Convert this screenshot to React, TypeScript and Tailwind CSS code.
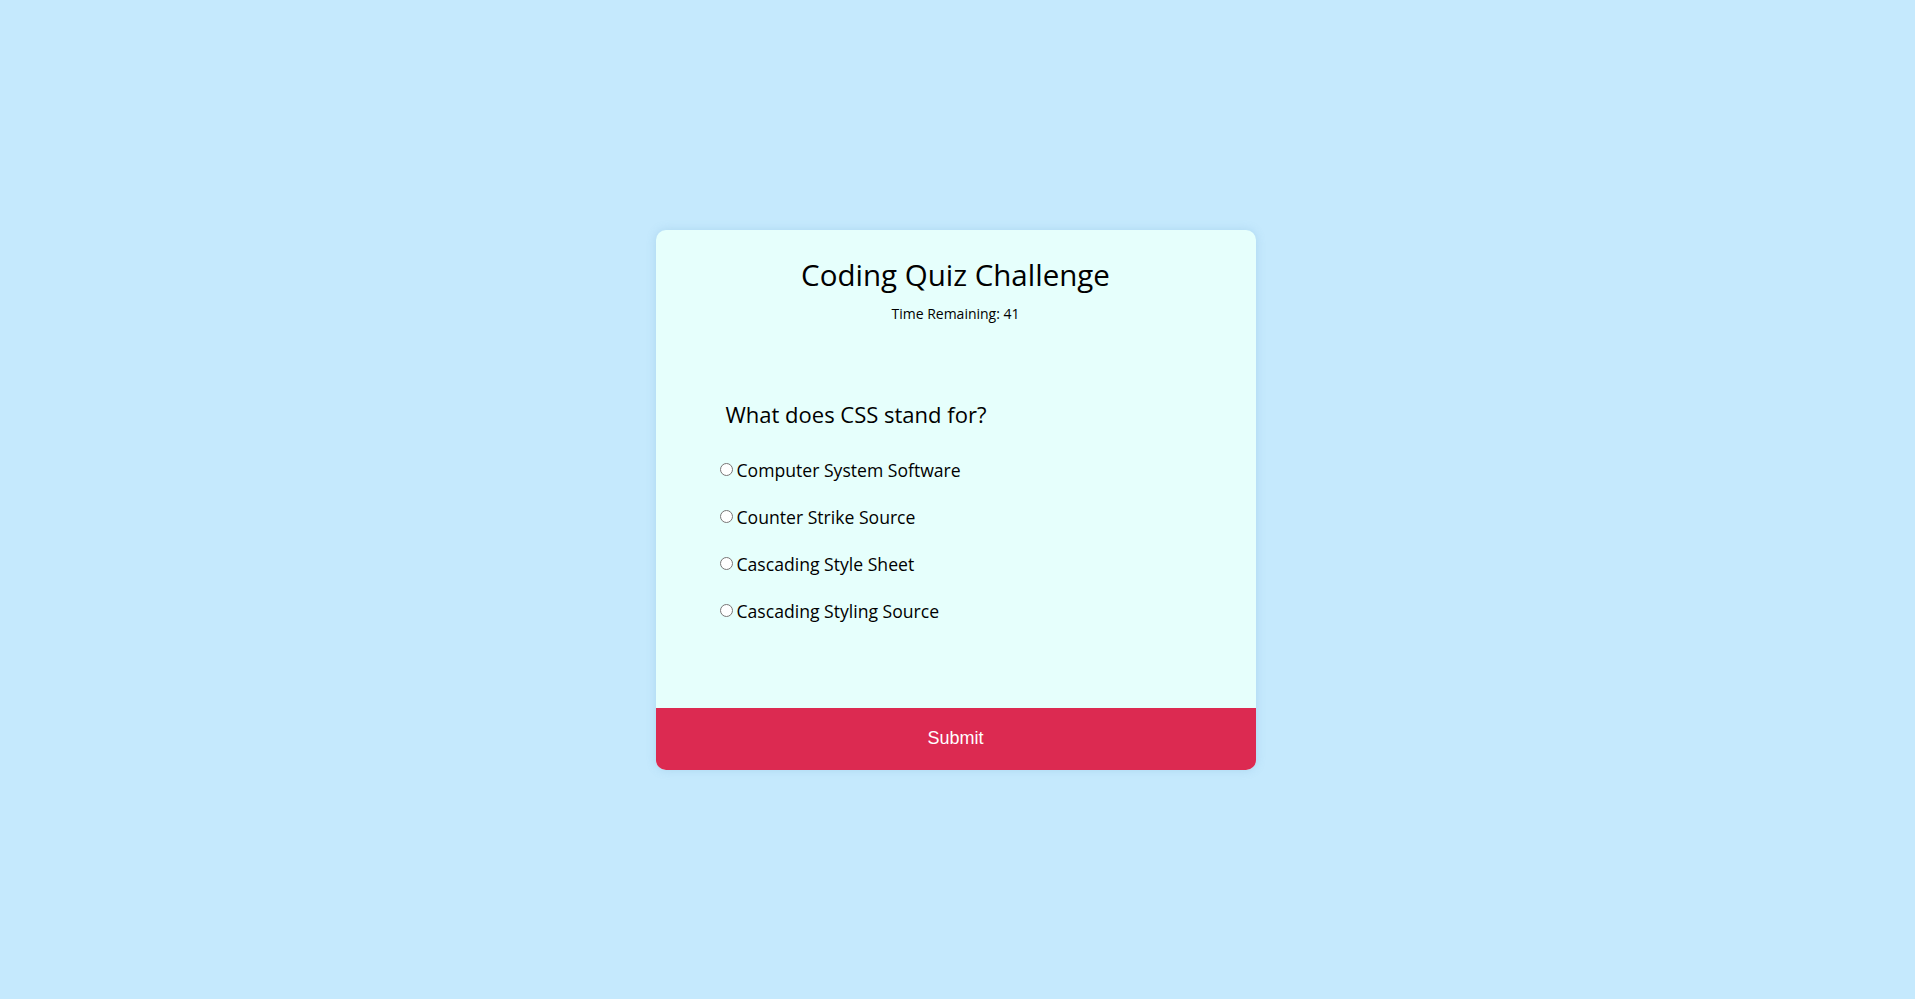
import { useState } from "react";

const choices = [
  "Computer System Software",
  "Counter Strike Source",
  "Cascading Style Sheet",
  "Cascading Styling Source",
];

export default function App() {
  const [picked, setPicked] = useState<string | null>(null);

  return (
    <div className="flex min-h-screen items-center justify-center bg-[#c5e9fd] pr-[4px] font-['Open_Sans',sans-serif]">
      <div className="flex h-[540px] w-[600px] flex-col overflow-hidden rounded-[10px] bg-[#e6fffc] shadow-[0_0_10px_rgba(100,160,200,0.25)]">
        <div className="flex-1">
          <h1 className="pt-[25px] text-center text-[29.5px] leading-[40px] text-black">
            Coding Quiz Challenge
          </h1>
          <p className="mt-[9px] text-center text-[14px] leading-[20px] text-black">
            Time Remaining: 41
          </p>

          <h2 className="ml-[70px] mt-[74px] text-[22px] leading-[32px] text-black">
            What does CSS stand for?
          </h2>
          <ul className="ml-[59px] mt-[28px] flex flex-col gap-[23px]">
            {choices.map((c) => (
              <li key={c} className="flex items-center text-[17.6px] leading-[24px] text-black">
                <input
                  type="radio"
                  name="answer"
                  id={c}
                  checked={picked === c}
                  onChange={() => setPicked(c)}
                  className="ml-[5px] mr-[4px] h-[13px] w-[13px]"
                />
                <label htmlFor={c}>{c}</label>
              </li>
            ))}
          </ul>
        </div>
        <button className="h-[62px] w-full bg-[#dc2a51] font-['Liberation_Sans',sans-serif] text-[18px] text-white">
          Submit
        </button>
      </div>
    </div>
  );
}
